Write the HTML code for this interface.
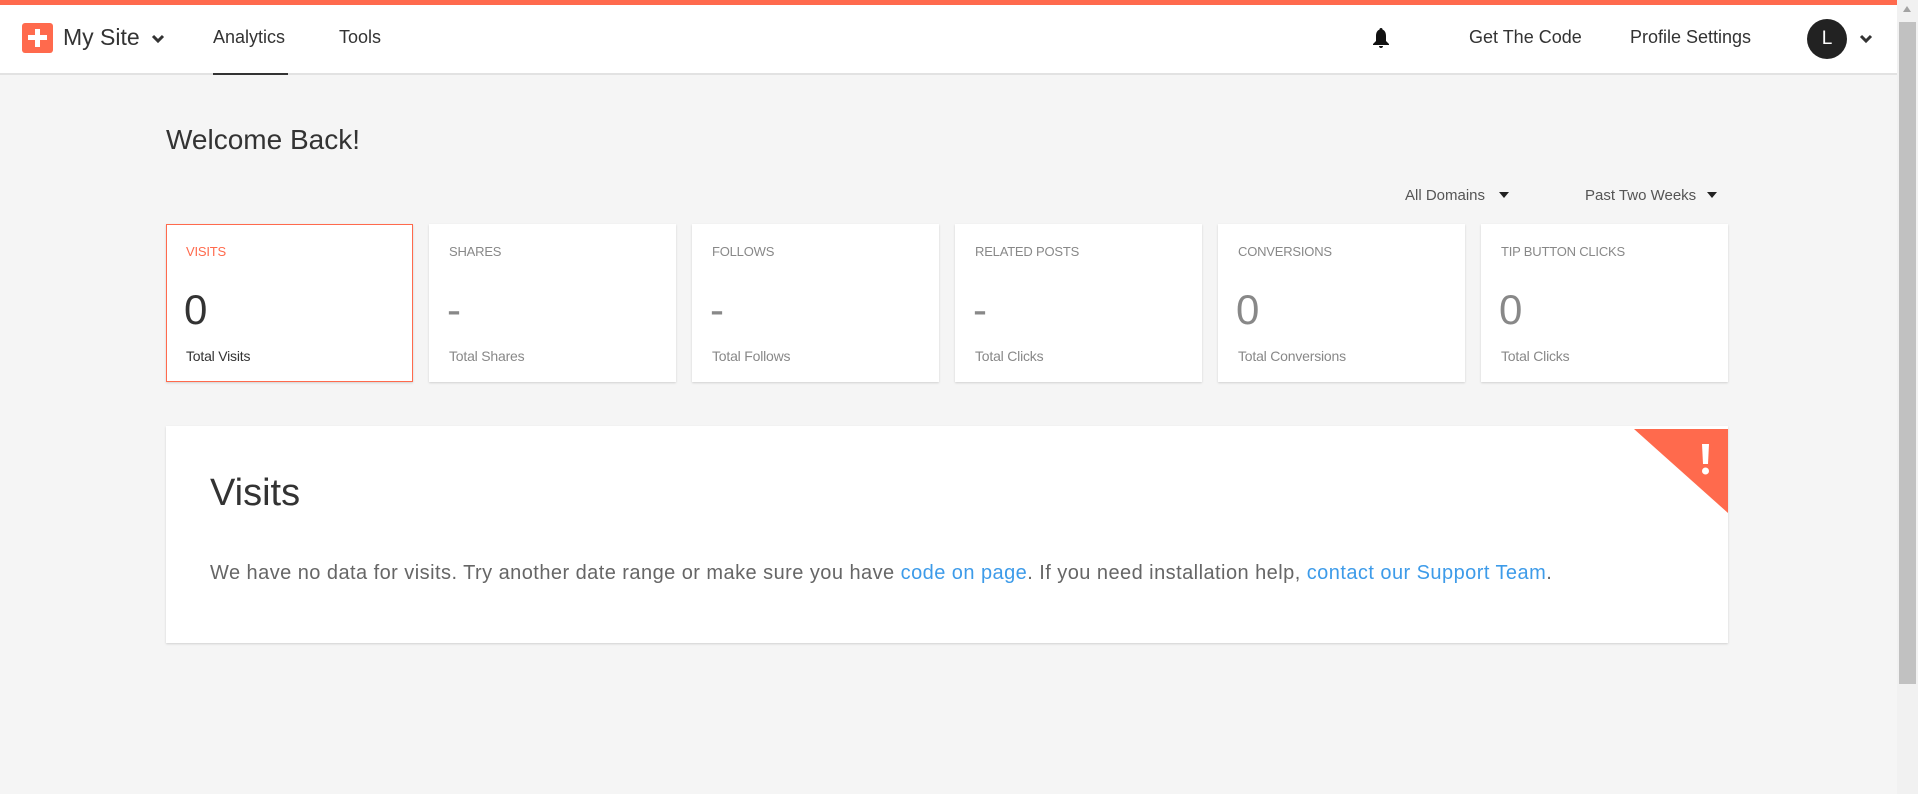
<!DOCTYPE html>
<html><head><meta charset="utf-8"><style>
*{margin:0;padding:0;box-sizing:border-box}
body{width:1918px;height:794px;overflow:hidden;background:#f5f5f5;font-family:"Liberation Sans",sans-serif;color:#333;position:relative}
.top{position:absolute;left:0;top:0;width:1897px;height:5px;background:#ff6a4d}
.hdr{position:absolute;left:0;top:5px;width:1897px;height:70px;background:#fff;border-bottom:2px solid #e2e2e2}
.abs{position:absolute;white-space:nowrap}
.sb{position:absolute;left:1897px;top:0;width:21px;height:794px;background:#f1f1f1}
.thumb{position:absolute;left:1899px;top:22px;width:17px;height:662px;background:#c1c1c1}
.card{position:absolute;top:224px;width:247px;height:158px;background:#fff;box-shadow:0 1px 2px rgba(0,0,0,.15)}
.card .l{position:absolute;left:20px;top:20px;font-size:13px;color:#888;letter-spacing:-.2px}
.card .n{position:absolute;left:18px;top:62px;font-size:42px;color:#888;font-weight:300}
.card .s{position:absolute;left:20px;top:124px;font-size:14px;color:#888;letter-spacing:-.2px}
.panel{position:absolute;left:166px;top:426px;width:1562px;height:217px;background:#fff;box-shadow:0 1px 2px rgba(0,0,0,.15)}
a{color:#3d9be9;text-decoration:none}
</style></head><body>
<div class="top"></div>
<div class="hdr"></div>
<div class="abs" style="left:22px;top:23px;width:31px;height:30px;background:#ff6a4d;border-radius:3px"></div>
<div class="abs" style="left:35px;top:29px;width:5px;height:18px;background:#fff"></div>
<div class="abs" style="left:28px;top:35px;width:19px;height:5px;background:#fff"></div>
<div class="abs" style="left:63px;top:24px;font-size:23px;color:#333">My Site</div>
<svg class="abs" style="left:151px;top:34px" width="14" height="10" viewBox="0 0 14 10"><path d="M2 2l5 5 5-5" stroke="#333" stroke-width="3" fill="none"/></svg>
<div class="abs" style="left:213px;top:27px;font-size:18px;color:#333">Analytics</div>
<div class="abs" style="left:213px;top:73px;width:75px;height:2px;background:#333"></div>
<div class="abs" style="left:339px;top:27px;font-size:18px;color:#333">Tools</div>
<svg class="abs" style="left:1372px;top:27px" width="18" height="22" viewBox="0 0 18 22"><path d="M9 1c1 0 1.5.6 1.5 1.5C13 3.5 14 6 14 9v5l3 3v1H1v-1l3-3V9c0-3 1-5.5 3.5-6.5C7.5 1.6 8 1 9 1z M7 19h4c0 1.2-.9 2-2 2s-2-.8-2-2z" fill="#111"/></svg>
<div class="abs" style="left:1469px;top:27px;font-size:18px;color:#333">Get The Code</div>
<div class="abs" style="left:1630px;top:27px;font-size:18px;color:#333">Profile Settings</div>
<div class="abs" style="left:1807px;top:19px;width:40px;height:40px;border-radius:50%;background:#222;color:#fff;font-size:19px;text-align:center;line-height:40px">L</div>
<svg class="abs" style="left:1859px;top:34px" width="14" height="10" viewBox="0 0 14 10"><path d="M2 2l5 5 5-5" stroke="#333" stroke-width="3" fill="none"/></svg>
<div class="abs" style="left:166px;top:124px;font-size:28px;color:#333">Welcome Back!</div>
<div class="abs" style="left:1405px;top:187px;font-size:15px;color:#555">All Domains</div>
<div class="abs" style="left:1499px;top:192px;border:5px solid transparent;border-top:6px solid #222;border-bottom:0"></div>
<div class="abs" style="left:1585px;top:187px;font-size:15px;color:#555">Past Two Weeks</div>
<div class="abs" style="left:1707px;top:192px;border:5px solid transparent;border-top:6px solid #222;border-bottom:0"></div>

<div class="card" style="left:166px;border:1px solid #ff6a4d"><div class="l" style="left:19px;top:19px;color:#ff6a4d">VISITS</div><div class="n" style="left:17px;top:61px;color:#333">0</div><div class="s" style="left:19px;top:123px;color:#333">Total Visits</div></div>
<div class="card" style="left:429px"><div class="l">SHARES</div><div class="n">-</div><div class="s">Total Shares</div></div>
<div class="card" style="left:692px"><div class="l">FOLLOWS</div><div class="n">-</div><div class="s">Total Follows</div></div>
<div class="card" style="left:955px"><div class="l">RELATED POSTS</div><div class="n">-</div><div class="s">Total Clicks</div></div>
<div class="card" style="left:1218px"><div class="l">CONVERSIONS</div><div class="n">0</div><div class="s">Total Conversions</div></div>
<div class="card" style="left:1481px"><div class="l">TIP BUTTON CLICKS</div><div class="n">0</div><div class="s">Total Clicks</div></div>

<div class="panel">
<svg class="abs" style="left:1468px;top:3px" width="94" height="84" viewBox="0 0 94 84"><path d="M0 0H94V84z" fill="#ff6a4d"/><path d="M68 15h7l-1 20h-5z" fill="#fff"/><circle cx="71.5" cy="42" r="3.5" fill="#fff"/></svg>
<div class="abs" style="left:44px;top:46px;font-size:38px;color:#333">Visits</div>
<div class="abs" style="left:44px;top:136px;font-size:20px;color:#666;letter-spacing:.45px">We have no data for visits. Try another date range or make sure you have <a>code on page</a>. If you need installation help, <a>contact our Support Team</a>.</div>
</div>
<div class="sb"></div><div class="thumb"></div>
<div class="abs" style="left:1903px;top:6px;border:4px solid transparent;border-bottom:6px solid #a3a3a3;border-top:0"></div>
</body></html>
